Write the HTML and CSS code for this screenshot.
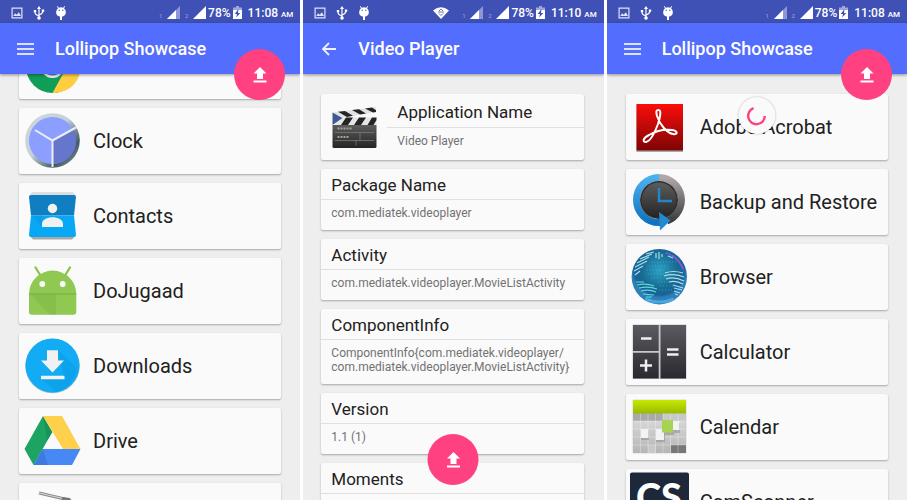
FILE: index.html
```html
<!DOCTYPE html>
<html lang="en">
<head>
<meta charset="utf-8">
<meta name="viewport" content="width=device-width, initial-scale=1">
<title>Lollipop Showcase</title>
<link rel="stylesheet" href="styles.css">
</head>
<body>
<svg class="defs" aria-hidden="true">
  <symbol id="picture" viewBox="0 0 12 12"><path fill="#dfe3f5" fill-rule="evenodd" d="M.5.5h11v11H.5zM1.700 1.700v8.600h8.600V1.700zM2.200 9l2-2.700 1.500 1.500 2.200-2.500L10 9z"/></symbol>
  <symbol id="usb" viewBox="0 0 12 14"><g fill="none" stroke="#fff" stroke-width="1.200"><path d="M6 2v10M6 10C3 8.500 2 8.500 2 5.500M6 9c3-1 4-2 4-4.500"/></g><path fill="#fff" d="M6 0l2 3H4zM.8 4h2.400v2.200H.8zM8.800 3.500h2.400v2.300H8.800z"/><circle cx="6" cy="12" r="1.800" fill="#fff"/></symbol>
  <symbol id="debug" viewBox="0 0 12 14"><path fill="#fff" d="M2.500 0l1.300 1.700a5 5 0 0 1 4.400 0L9.500 0l.6.500L9 2.300c1 1 1.500 2 1.800 3.200.4 2.500-1 4.500-3.100 5H7V14H5v-3.500h-.7C2 10 .8 8 1.200 5.500 1.500 4.300 2 3.300 3 2.300L1.900.5z"/><circle cx="4.200" cy="4.200" r=".7" fill="#3f51b5"/><circle cx="7.800" cy="4.200" r=".7" fill="#3f51b5"/></symbol>
  <symbol id="signal" viewBox="0 0 13 13"><path fill="#8c97d3" d="M13 0v13H0z"/><path fill="#fff" d="M9 4v9H0z"/></symbol>
  <symbol id="signal-full" viewBox="0 0 13 13"><path fill="#fff" d="M13 0v13H0z"/></symbol>
  <symbol id="battery" viewBox="0 0 9 13"><path fill="#9ea8dc" d="M3 0h3v1.500h3V5H0V1.500h3z"/><path fill="#fff" d="M0 4h9v9H0z"/><path fill="#3f51b5" d="M5.500 3L1.700 8H4l-.8 3.500L7.300 7H5z"/></symbol>
  <symbol id="wifi" viewBox="0 0 16 12"><path fill="#fff" d="M0 3.500Q8-3 16 3.500L8 12z"/><path fill="none" stroke="#3f51b5" stroke-width=".8" d="M6 4l2-2 2 2M5 5h6M6 6.500l2 2 2-2"/></symbol>
  <symbol id="upload" viewBox="0 0 14 16"><path fill="#fff" d="M7 0l6.500 6.500H10V12H4V6.500H.5zM.5 13.500h13v2H.5z"/></symbol>
  <symbol id="menu" viewBox="0 0 17 12"><path fill="#dde2ff" d="M0 0h17v2H0zM0 5h17v2H0zM0 10h17v2H0z"/></symbol>
  <symbol id="back" viewBox="0 0 17 14"><path fill="none" stroke="#edf0ff" stroke-width="1.800" d="M16 7H3M9 1L3 7l6 6"/></symbol>
  <linearGradient id="red" x2="0" y2="1"><stop stop-color="#fb0d0a"/><stop offset="1" stop-color="#7d0505"/></linearGradient>
  <linearGradient id="slate" x2="0" y2="1"><stop stop-color="#5a5a60"/><stop offset="1" stop-color="#29292f"/></linearGradient>
  <linearGradient id="board" x2="0" y2="1"><stop stop-color="#5c5c5c"/><stop offset="1" stop-color="#252525"/></linearGradient>
  <linearGradient id="lime" x2="0" y2="1"><stop stop-color="#c6e800"/><stop offset="1" stop-color="#9abb00"/></linearGradient>
  <linearGradient id="paper" x2="0" y2="1"><stop stop-color="#ececec"/><stop offset="1" stop-color="#b5b5b5"/></linearGradient>
  <linearGradient id="blue" x2="0" y2="1"><stop stop-color="#4bb0ef"/><stop offset="1" stop-color="#1272bd"/></linearGradient>
  <linearGradient id="steel" x2="0" y2="1"><stop stop-color="#b0a8a8"/><stop offset="1" stop-color="#3c3c40"/></linearGradient>
  <linearGradient id="rim" x2="1" y2="1"><stop stop-color="#cfd8dc"/><stop offset=".45" stop-color="#c5d2d5"/><stop offset=".75" stop-color="#455a64"/><stop offset="1" stop-color="#90a4ae"/></linearGradient>
  <radialGradient id="sea" cx=".5" cy=".38"><stop stop-color="#2ba0c4"/><stop offset=".65" stop-color="#176b93"/><stop offset=".9" stop-color="#1a6398"/><stop offset="1" stop-color="#2e7fb8"/></radialGradient>
</svg>

<main class="screens">
  <section class="phone" aria-label="App list">
    <div class="status">
      <svg class="s-pic"><use href="#picture"/></svg><svg class="s-tall"><use href="#usb"/></svg><svg class="s-tall"><use href="#debug"/></svg>
      <div class="status-right"><span class="sim">1</span><svg class="s-signal"><use href="#signal"/></svg><span class="sim">2</span><svg class="s-signal"><use href="#signal-full"/></svg><span class="percent">78%</span><svg class="s-battery"><use href="#battery"/></svg><span class="time">11:08 <small>AM</small></span></div>
    </div>
    <header class="toolbar"><button class="nav" aria-label="Menu"><svg class="i-menu"><use href="#menu"/></svg></button><h1>Lollipop Showcase</h1></header>
    <button class="fab fab-top" aria-label="Upload"><svg><use href="#upload"/></svg></button>
    <div class="view">
      <ul class="apps scrolled">
        <li><a class="card app" href="#chrome" aria-label="Chrome"><svg class="icon" viewBox="0 0 56 56"><circle cx="28.500" cy="28.500" r="26.500" fill="#0f9d58"/><path fill="#ffcd40" d="M28.500 55L40 34l-2-19h15a26.500 26.500 0 0 1-24.500 40z"/><path fill="#db4437" d="M5.500 15a26.500 26.500 0 0 1 47 2h-24L17 33z"/><circle cx="28.500" cy="28" r="12" fill="#f1f1f1"/><circle cx="28.500" cy="28" r="9.500" fill="#4285f4"/></svg></a></li>
        <li><a class="card app" href="#clock"><svg class="icon" viewBox="0 0 56 56"><circle cx="28.500" cy="27.500" r="27.300" fill="url(#rim)"/><circle cx="28.500" cy="27.500" r="23.500" fill="#8c9eff"/><path fill="#5c6bc0" d="M28.500 27.500L50 16.500A24 24 0 0 1 28.500 51z" opacity=".8"/><path fill="none" stroke="#eceff1" stroke-width="2" d="M11 17l17.500 10.500L52 14.500M28.500 27v27"/></svg>Clock</a></li>
        <li><a class="card app" href="#contacts"><svg class="icon" viewBox="0 0 56 56"><path fill="#dedede" d="M8 4h41l3 5H5z"/><path fill="#a8a8a8" d="M5 47h47l-4 4.500H9z"/><path fill="#0f7fc2" d="M7 7h43q2 0 2 2l-2 18.500H7L5 9q0-2 2-2z"/><path fill="#09a8f4" d="M7 27.500h43L52 47q0 2-2 2H7q-2 0-2-2z"/><path fill="#0b94dc" d="M8 27.500h10V39z" opacity=".5"/><circle cx="28.500" cy="20.500" r="4.700" fill="#f1f1f1"/><path fill="#f1f1f1" d="M18 39v-3c0-9 21-9 21 0v3z"/></svg>Contacts</a></li>
        <li><a class="card app" href="#dojugaad"><svg class="icon" viewBox="0 0 56 56"><path stroke="#8bc34a" stroke-width="2.300" stroke-linecap="round" d="M11.500 4.500l5 8M46 4.500l-5 8"/><path fill="#8fc952" d="M5 31a23.650 23.400 0 0 1 47.300 0v18q0 2.700-2.700 2.700H7.700Q5 51.700 5 49z"/><path fill="#6fa53b" d="M6 31h26v20.700h-6z" opacity=".25"/><path stroke="#72ae3e" d="M5 31h47.300"/><circle cx="18.300" cy="21" r="2.900" fill="#fafafa"/><circle cx="38.700" cy="21" r="2.900" fill="#fafafa"/></svg>DoJugaad</a></li>
        <li><a class="card app" href="#downloads"><svg class="icon" viewBox="0 0 56 56"><circle cx="28.500" cy="28" r="27.200" fill="#a9bac4"/><circle cx="28.500" cy="27.500" r="27" fill="#12acf5"/><path fill="#0799e2" d="M34 12l19 18a27 27 0 0 1-21 24L17 41h23l-3-16z" opacity=".45"/><path fill="#f1f1f1" d="M23 12.300h11V22.500h6L28.500 34.500 17 22.500h6zM17 37.700h23.500v3.500H17z"/></svg>Downloads</a></li>
        <li><a class="card app" href="#drive"><svg class="icon" viewBox="0 0 56 56"><path fill="#1da462" d="M19 3l9.300 16L9.500 52 .5 36z"/><path fill="#148a50" d="M19 3l9.300 16-5 8.500z" opacity=".6"/><path fill="#ffd04b" d="M19 3h19l18.500 33H39z"/><path fill="#4688f4" d="M18.500 36h38L48 52H9.500z"/><path fill="#3b6fd0" d="M18.500 36L24 52H9.500z" opacity=".6"/></svg>Drive</a></li>
        <li><a class="card app" href="#tools" aria-label="Tools"><svg class="icon" viewBox="0 0 56 56"><path fill="none" stroke="#8a8a8a" stroke-width="3" d="M15 5l32 7.500"/><path stroke="#d5d5d5" stroke-width="1.200" d="M15 5l24 5.500"/><path fill="#777" d="M38 9l8 1v8h-8z"/></svg></a></li>
      </ul>
    </div>
  </section>

  <section class="phone" aria-label="App details">
    <div class="status">
      <svg class="s-pic"><use href="#picture"/></svg><svg class="s-tall"><use href="#usb"/></svg><svg class="s-tall"><use href="#debug"/></svg>
      <div class="status-right"><svg class="s-wifi"><use href="#wifi"/></svg><span class="sim">1</span><svg class="s-signal"><use href="#signal"/></svg><span class="sim">2</span><svg class="s-signal"><use href="#signal-full"/></svg><span class="percent">78%</span><svg class="s-battery"><use href="#battery"/></svg><span class="time">11:10 <small>AM</small></span></div>
    </div>
    <header class="toolbar"><button class="nav" aria-label="Back"><svg class="i-back"><use href="#back"/></svg></button><h1>Video Player</h1></header>
    <button class="fab fab-bottom" aria-label="Upload"><svg><use href="#upload"/></svg></button>
    <div class="view">
      <div class="details">
        <article class="card lead">
          <svg class="icon" viewBox="0 0 56 56"><path fill="#e2e2e2" d="M6.500 13.500l43.500-5.500v5L17 18.500z"/><path fill="#252525" d="M12 12.800l7-.9 8 4.800-6 1.200zM26 11.100l7-.9 7 4.400-6 1zM39 9.500l7-.9 4 2.700V13l-3 .5z"/><path fill="#e6e6e6" d="M14 18.500h36.500V26H8z"/><path fill="#252525" d="M20 18.500h7L22 26h-7zM33 18.500h7L35 26h-7zM46 18.500h4.500V21L47.500 26h-6z"/><path fill="#3e5b96" d="M6.500 13.500l10 5.500-10 7z"/><path fill="url(#board)" d="M6.500 26h44v21.500q0 1.500-1.500 1.500H8q-1.500 0-1.500-1.500z"/><path fill="none" stroke="#85837a" stroke-width=".7" d="M9 33.500h39M9 41.500h39M34 33.500v8M30 41.500v5"/><path fill="none" stroke="#a5a294" stroke-dasharray="2 1" stroke-width="2" d="M11.500 29.500h15M11.500 38h11"/></svg>
          <div class="lead-text"><h2>Application Name</h2><p>Video Player</p></div>
        </article>
        <article class="card"><h2>Package Name</h2><p>com.mediatek.videoplayer</p></article>
        <article class="card"><h2>Activity</h2><p>com.mediatek.videoplayer.MovieListActivity</p></article>
        <article class="card"><h2>ComponentInfo</h2><p>ComponentInfo{com.mediatek.videoplayer/<wbr>com.mediatek.videoplayer.MovieListActivity}</p></article>
        <article class="card"><h2>Version</h2><p>1.1 (1)</p></article>
        <article class="card"><h2>Moments</h2><p></p></article>
      </div>
    </div>
  </section>

  <section class="phone" aria-label="App list refreshing">
    <div class="status">
      <svg class="s-pic"><use href="#picture"/></svg><svg class="s-tall"><use href="#usb"/></svg><svg class="s-tall"><use href="#debug"/></svg>
      <div class="status-right"><span class="sim">1</span><svg class="s-signal"><use href="#signal"/></svg><span class="sim">2</span><svg class="s-signal"><use href="#signal-full"/></svg><span class="percent">78%</span><svg class="s-battery"><use href="#battery"/></svg><span class="time">11:08 <small>AM</small></span></div>
    </div>
    <header class="toolbar"><button class="nav" aria-label="Menu"><svg class="i-menu"><use href="#menu"/></svg></button><h1>Lollipop Showcase</h1></header>
    <button class="fab fab-top" aria-label="Upload"><svg><use href="#upload"/></svg></button>
    <div class="view">
      <div class="spinner"><svg viewBox="0 0 20 20"><path fill="none" stroke="#ff4081" stroke-width="2.400" d="M7 2.200A8.300 8.300 0 1 0 18.300 10"/></svg></div>
      <ul class="apps">
        <li><a class="card app" href="#acrobat"><svg class="icon" viewBox="0 0 56 56"><path fill="#aaa" d="M5.500 6h46.500v47H5.500z"/><path fill="url(#red)" d="M5.500 5h46.500v46.500H5.500z"/><path fill="none" stroke="#fff" stroke-width="2" d="M27 11c4-1 2 8 0 14-3 8-7 17-12 18-4 0-3-4 3-7 7-4 16-6 23-5 6 1 6 5 1 4-6-1-13-9-16-18-1-4-1-6 1-6z"/></svg>Adobe Acrobat</a></li>
        <li><a class="card app" href="#backup"><svg class="icon" viewBox="0 0 56 56"><path fill="none" stroke="url(#steel)" stroke-width="7" d="M28 3.500a22.500 22.500 0 0 1 8 43.500"/><path fill="none" stroke="url(#blue)" stroke-width="7" d="M28 3.500a22.500 22.500 0 0 0 0 45h2"/><circle cx="28" cy="26" r="19" fill="#2c2c2c"/><circle cx="28" cy="26" r="17.500" fill="url(#board)"/><path fill="#2389d1" d="M28 38l11.500 8.500L29 56.500z"/><path fill="none" stroke="#2386cb" stroke-width="2.500" d="M28 14v13h13"/></svg>Backup and Restore</a></li>
        <li><a class="card app" href="#browser"><svg class="icon" viewBox="0 0 56 56"><circle cx="28.300" cy="27.700" r="27.700" fill="url(#sea)"/><path fill="none" stroke="#51b5ce" stroke-width=".6" stroke-dasharray="1 2" d="M20 13h25M18 17h20M16 21h18M17 25h16M20 29h12M27 33h10M29 37h13M28 41h14"/><path fill="none" stroke="#acdde8" stroke-width="1.200" d="M15 5l8-2M9 10l12-5M6 14l12-6M4 18l12-6M3 22l9-5M4 26l5-4M25 4v5M28 3v7M31 5v3M37 7l5 2M34 24q8-3 18 0M33 27q9-3 20 1M35 30q8-3 18 2M38 33q7-2 14 2M42 36l10 3M43 39l8 2M43 42l6 2M44 45l3 1"/><path fill="none" stroke="#62d8d6" stroke-width="1.200" d="M5 33l8 0M6 36q9-2 17 1M8 39q10-2 18 1M10 42q8-2 15 1M12 45l11 1M15 48l6 0M17 51l3 0"/><path fill="none" stroke="#9b55df" stroke-width="1.500" stroke-dasharray="2 1" d="M35 4q11 3 17 16M42 7q7 5 11 15"/><path fill="none" stroke="#51b7ef" stroke-width="3" d="M14 50q14 6 29 0" opacity=".7"/></svg>Browser</a></li>
        <li><a class="card app" href="#calculator"><svg class="icon" viewBox="0 0 56 56"><path fill="#c8c8c8" d="M1.500.5h54V55h-54z"/><path fill="url(#slate)" d="M2 1h25.700v26H2zM2 28.700h25.700v25.800H2zM29.500 1H55v53.500H29.500z"/><path fill="none" stroke="#eee" stroke-width="2.500" d="M10 14.500h10.500M9 41.500h12M15 35.500v12M36 25.500h11.500M36 30.500h11.500"/></svg>Calculator</a></li>
        <li><a class="card app" href="#calendar"><svg class="icon" viewBox="0 0 56 56"><path fill="url(#paper)" stroke="#bbb" stroke-width=".5" d="M2 1h53v53H2z"/><path fill="#aaa" d="M2 14h30v8H2z"/><path fill="#c8c8c8" d="M32 14h23v8H32zM17 46h8v8h-8z"/><path fill="#777" d="M40 46h15v8H40z"/><path fill="none" stroke="#fff" stroke-width=".6" d="M9.500 14v40M17 14v40M24.500 14v40M32 14v40M39.500 14v40M47 14v40M2 22h53M2 30h53M2 38h53M2 46h53" opacity=".5"/><path fill="url(#lime)" d="M2 1h53v13.500H2z"/><path fill="#888" d="M10 31h8v10h-8zM25 31h9v12h-9zM31 23h12v13H31zM43 24h6v10h-6z" opacity=".5"/><path fill="#f3f3f3" d="M10 30h7.500v9H10zM25 30h8v11h-8zM42 22h6.500v9H42z"/><path fill="#a8d352" d="M31 21h11v12.500H31z"/></svg>Calendar</a></li>
        <li><a class="card app" href="#camscanner"><svg class="icon" viewBox="0 0 56 56"><rect x="-1" y="-1.500" width="59" height="59" rx="2" fill="#1d293b"/><text class="cs" x="5" y="37">CS</text></svg>CamScanner</a></li>
      </ul>
    </div>
  </section>
</main>
</body>
</html>
```
FILE: styles.css
```css
* { box-sizing: border-box; }

body {
  margin: 0;
  background: #fff;
  color: #212121;
  font-family: Roboto, "Liberation Sans", sans-serif;
}

h1, h2, p, ul { margin: 0; padding: 0; font-weight: 400; }
ul { list-style: none; }
svg { display: block; flex: none; }
button { border: 0; padding: 0; cursor: pointer; }
.defs { position: absolute; width: 0; height: 0; }

.screens {
  display: grid;
  grid-template-columns: repeat(3, 1fr);
  gap: 3px;
  height: 100vh;
}

.phone {
  position: relative;
  display: flex;
  flex-direction: column;
  min-width: 0;
  min-height: 0;
  overflow: hidden;
  background: #eee;
}

/* System status bar */
.status {
  display: flex;
  flex: none;
  align-items: center;
  gap: 10px;
  height: 23px;
  padding: 2px 7px 0 11px;
  background: #3f51b5;
  color: #fff;
  font-size: 12px;
  font-weight: 500;
}
.status-right { display: flex; align-items: center; margin-left: auto; }
.s-pic { width: 12px; height: 12px; }
.s-tall { width: 12px; height: 14px; }
.s-signal { width: 13px; height: 13px; }
.s-battery { width: 9px; height: 13px; margin: 0 6px 0 2px; }
.s-wifi { width: 16px; height: 12px; margin-right: 8px; }
.sim { width: 13px; padding: 6px 4px 0; color: #8c97d3; font-size: 6px; text-align: center; }
.percent { margin-left: 2px; }
.time small { font-size: 8px; }

/* Toolbar */
.toolbar {
  position: relative;
  z-index: 1;
  display: flex;
  flex: none;
  align-items: center;
  height: 51px;
  padding-left: 17px;
  background: #536dfe;
  box-shadow: 0 1px 3px rgba(0, 0, 0, .4);
  color: #fff;
}
.toolbar h1 { font-size: 18px; font-weight: 500; line-height: 24px; }
.nav { display: flex; width: 38px; height: 24px; align-items: center; background: none; }
.i-menu { width: 17px; height: 12px; }
.i-back { width: 17px; height: 14px; }

.fab {
  position: absolute;
  z-index: 2;
  display: grid;
  place-items: center;
  width: 51px;
  height: 51px;
  border-radius: 50%;
  background: #ff4081;
}
.fab svg { width: 14px; height: 16px; }
.fab-top { top: 49px; right: 15px; }
.fab-bottom { bottom: 15px; left: 50%; transform: translateX(-50%); }

/* Content */
.view { position: relative; flex: 1; min-height: 0; overflow: hidden; }
.apps, .details {
  display: flex;
  flex-direction: column;
  gap: 9px;
  padding: 20px 19px;
}
.details { padding: 20px 20px 20px 18px; }
.scrolled { margin-top: -61px; }

.card {
  display: block;
  border-radius: 2px;
  background: #fafafa;
  box-shadow: 0 1px 2px rgba(0, 0, 0, .3);
}
.app {
  display: flex;
  align-items: center;
  gap: 13px;
  height: 66px;
  padding: 0 5px;
  color: #212121;
  font-size: 20px;
  text-decoration: none;
  white-space: nowrap;
}
.icon { width: 56px; height: 56px; overflow: visible; }
.cs { fill: #fff; font: 900 38px Lato, sans-serif; }

.card h2 {
  height: 31px;
  padding: 0 10px;
  border-bottom: 1px solid #e0e0e0;
  font-size: 17px;
  line-height: 32px;
}
.card p {
  padding: 6px 10px 10px;
  color: #727272;
  font-size: 12px;
  line-height: 14px;
}
.lead { display: flex; align-items: center; gap: 5px; height: 66px; padding-left: 5px; }
.lead-text { flex: 1; align-self: stretch; }
.card.lead h2 { height: 34px; line-height: 37px; }

.spinner {
  position: absolute;
  z-index: 1;
  top: 23px;
  left: 50%;
  display: grid;
  place-items: center;
  width: 37px;
  height: 37px;
  transform: translateX(-50%);
  border-radius: 50%;
  background: #fafafa;
  box-shadow: 0 0 2px rgba(0, 0, 0, .3);
}
.spinner svg { width: 20px; height: 20px; }
```
